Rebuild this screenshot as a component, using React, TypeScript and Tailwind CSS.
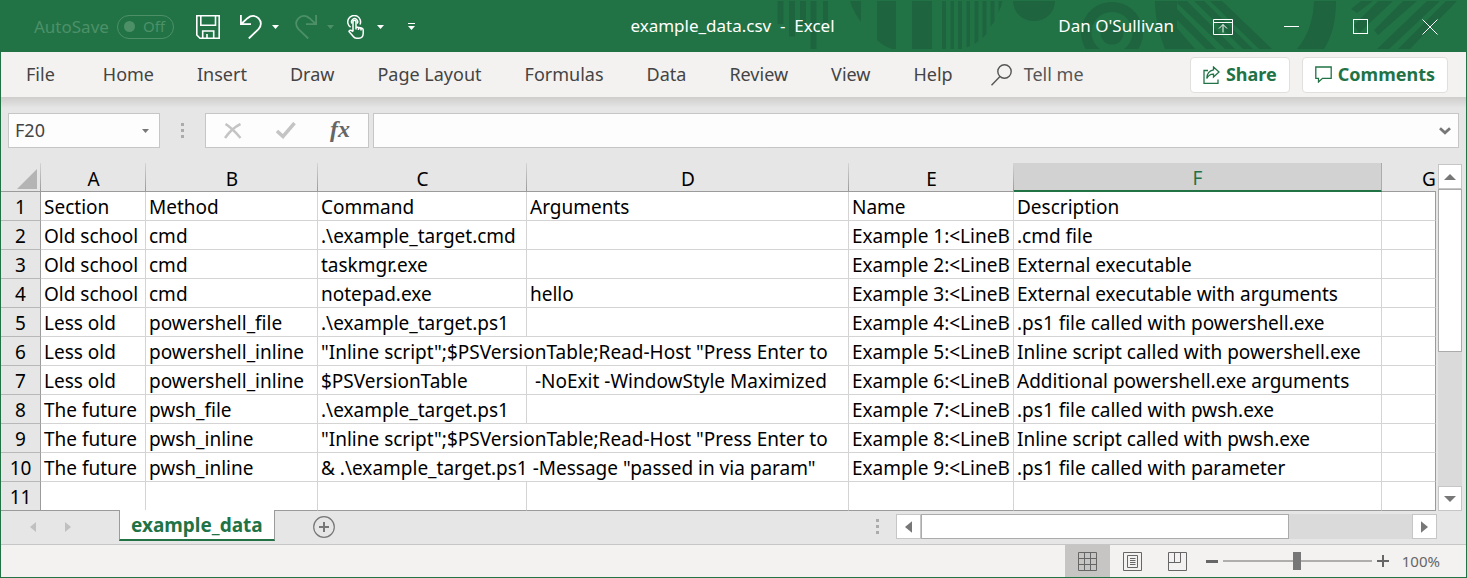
import type { ReactNode } from "react";

const menuItems = ["Home", "Insert", "Draw", "Page Layout", "Formulas", "Data", "Review", "View", "Help"];

type Row = { section: string; method: string; command: string; args?: string; name: string; description: string; spill?: boolean };

const rows: Row[] = [
  { section: "Section", method: "Method", command: "Command", args: "Arguments", name: "Name", description: "Description" },
  { section: "Old school", method: "cmd", command: ".\\example_target.cmd", name: "Example 1:<LineB", description: ".cmd file" },
  { section: "Old school", method: "cmd", command: "taskmgr.exe", name: "Example 2:<LineB", description: "External executable" },
  { section: "Old school", method: "cmd", command: "notepad.exe", args: "hello", name: "Example 3:<LineB", description: "External executable with arguments" },
  { section: "Less old", method: "powershell_file", command: ".\\example_target.ps1", name: "Example 4:<LineB", description: ".ps1 file called with powershell.exe" },
  { section: "Less old", method: "powershell_inline", command: '"Inline script";$PSVersionTable;Read-Host "Press Enter to', name: "Example 5:<LineB", description: "Inline script called with powershell.exe", spill: true },
  { section: "Less old", method: "powershell_inline", command: "$PSVersionTable", args: " -NoExit -WindowStyle Maximized", name: "Example 6:<LineB", description: "Additional powershell.exe arguments" },
  { section: "The future", method: "pwsh_file", command: ".\\example_target.ps1", name: "Example 7:<LineB", description: ".ps1 file called with pwsh.exe" },
  { section: "The future", method: "pwsh_inline", command: '"Inline script";$PSVersionTable;Read-Host "Press Enter to', name: "Example 8:<LineB", description: "Inline script called with pwsh.exe", spill: true },
  { section: "The future", method: "pwsh_inline", command: '& .\\example_target.ps1 -Message "passed in via param"', name: "Example 9:<LineB", description: ".ps1 file called with parameter", spill: true },
  { section: "", method: "", command: "", name: "", description: "" },
];

function Caret({ className }: { className: string }) {
  return (
    <svg viewBox="0 0 7 4" className={"h-1 w-[7px] " + className} fill="currentColor" aria-hidden="true">
      <path d="M0 0H7L3.5 4Z" />
    </svg>
  );
}

function TitlePattern() {
  return (
    <svg className="absolute top-0 right-0 h-[51px] w-[700px] max-w-none" viewBox="766 1 700 51" fill="#1e643e" aria-hidden="true">
      <path d="M777.5 1h6v23h-6zM789 1h6v35.500h-6zM800 1h6v24h-6zM810.500 1h6v48h-6zM823 1h5v24h-5z" />
      <path d="M850 1H861V22Q854 13 850 1ZM877 1H896V49H892Q883 46 877 40ZM912 1H932V49H912Z" />
      <path d="M942 1h4v48h-4zM950.500 1h3.500v48h-3.500zM958 1h4v48h-4zM966.500 1h3.500V46l-3.500 1.500zM974.500 1h4V41l-4 3zM982.500 1h4V34l-4 4zM990.500 1h4V21l-4 6zM998.500 1h4Q1001 7 998.500 13z" />
      <path d="M1013 1H1055A21 20 0 0 1 1013 1Z" />
      <path
        fillRule="evenodd"
        d="M1085.500 49A31 31 0 1 1 1138.500 49H1124A20.500 20.500 0 1 0 1100 49Z"
      />
      <circle cx="1112" cy="33" r="11.500" />
      <path d="M1155 1H1177V28L1195 49H1165Q1155 25 1155 1Z" />
      <path d="M1177 9L1216 49H1206L1177 20ZM1178 1H1187L1235 49H1225L1177 3ZM1194 1H1204L1253 49H1243ZM1210 1H1222L1272 49H1259Z" />
      <path d="M1314 1H1336Q1336 30 1324 49H1297Q1313 30 1314 1Z" />
      <path d="M1351 9L1361 1H1373L1357 13ZM1378 1H1393L1359 33L1354 25ZM1403 1H1417L1378 35L1374 30ZM1427 1H1440L1389 49H1377ZM1446 1H1457L1410 49H1398Z" />
    </svg>
  );
}

function WindowButton({ label, children }: { label: string; children: ReactNode }) {
  return (
    <button aria-label={label} className="flex h-full w-[69px] items-center justify-center">
      {children}
    </button>
  );
}

function TitleBar() {
  return (
    <header className="relative grid h-[51px] grid-cols-[1fr_auto_1fr] items-center overflow-hidden bg-[#217346] pr-0.5 text-[17px] text-white">
      <TitlePattern />
      <div className="relative flex h-full items-center pl-[33px]">
        <span className="w-[83px] text-[#4d9068]" id="autosave">AutoSave</span>
        <button role="switch" aria-checked="false" aria-labelledby="autosave" className="flex h-6 w-[57px] items-center justify-between rounded-full border border-[#4d9068] pr-2 pl-[6px] text-[15px] text-[#4d9068]">
          <span className="size-[11px] rounded-full bg-[#4d9068]" />
          Off
        </button>
        <button aria-label="Save" className="ml-[22px]">
          <svg viewBox="0 0 24 24" className="size-6" fill="none" stroke="currentColor" strokeWidth="1.600">
            <path d="M.8 .8H23.200V23.200H4L.8 20ZM4.800 .8V10.300H19.500V.8M6.700 23V16H17.700V23M11 19V23" />
          </svg>
        </button>
        <button aria-label="Undo" className="ml-5">
          <svg viewBox="0 0 22 24" className="h-6 w-[22px]" fill="none" stroke="currentColor" strokeWidth="1.800">
            <path d="M.9 0V9.200H11M1.200 9L7.500 3.200C11 .2 15.500 .3 18.600 3.300C21.700 6.500 21.500 11 18.500 14.200L8.800 23.500" />
          </svg>
        </button>
        <button aria-label="Undo history" className="ml-2.5"><Caret className="" /></button>
        <button aria-label="Redo" disabled className="ml-4 text-[#4d9068]">
          <svg viewBox="0 0 22 24" className="h-6 w-[22px]" fill="none" stroke="currentColor" strokeWidth="1.800">
            <path d="M21.100 0V9.200H11M20.800 9L14.500 3.200C11 .2 6.500 .3 3.400 3.300C.3 6.500 .5 11 3.500 14.200L13.200 23.500" />
          </svg>
        </button>
        <button aria-label="Redo history" disabled className="ml-2.5 text-[#4d9068]"><Caret className="" /></button>
        <button aria-label="Touch and mouse mode" className="ml-[13px]">
          <svg viewBox="0 0 17 24" className="h-6 w-[17px]" fill="none" stroke="currentColor" strokeWidth="1.500" strokeLinejoin="round">
            <path d="M3.600 12.200A6.400 6.400 0 1 1 13 9.500" />
            <path d="M5.200 8.500A3 3 0 1 1 10 8.500" />
            <path d="M6 16.500V6.500C6 4.900 9 4.900 9 6.500V12L14.500 13Q16.200 13.400 16.200 15V18.500Q16 23.200 12 23.200H9.500Q7.500 23.200 6.300 21.500L2 16.500Q2.500 14.200 6 16.500M9 11V14.500M11.500 12V15M14 12.500V15.500" />
          </svg>
        </button>
        <button aria-label="Touch mode options" className="ml-[13px]"><Caret className="" /></button>
        <button aria-label="Customize Quick Access Toolbar" className="ml-6">
          <svg viewBox="0 0 7 7" className="size-[7px]" fill="currentColor"><path d="M0 0H7V1H0ZM0 3H7L3.500 7Z" /></svg>
        </button>
      </div>
      <h1 className="relative whitespace-pre pb-px">example_data.csv  -  Excel</h1>
      <div className="relative flex h-full items-center justify-end">
        <button className="mr-[14px] pb-px">Dan O'Sullivan</button>
        <WindowButton label="Ribbon Display Options">
          <svg viewBox="0 0 20 16" className="h-4 w-5" fill="none" stroke="currentColor"><path d="M.5 .5H19.500V15.500H.5ZM.5 3.500H19.500M10 13.500V5.500M6 9.500L10 5.500L14 9.500" /></svg>
        </WindowButton>
        <WindowButton label="Minimize"><span className="h-px w-[15px] bg-white" /></WindowButton>
        <WindowButton label="Maximize"><span className="size-[15px] border border-white" /></WindowButton>
        <WindowButton label="Close">
          <svg viewBox="0 0 16 16" className="size-4" fill="none" stroke="currentColor"><path d="M.5 .5L15.500 15.500M15.500 .5L.5 15.500" /></svg>
        </WindowButton>
      </div>
    </header>
  );
}

function Ribbon() {
  return (
    <nav className="flex h-[45px] items-center bg-[#f3f2f1] pr-[18px] pl-[25px] text-[18px] text-[#444444]">
      <button className="mr-12">File</button>
      <div className="flex items-center gap-[43px] whitespace-nowrap">
        {menuItems.map((item) => (
          <button key={item}>{item}</button>
        ))}
      </div>
      <button className="ml-[38px] flex items-center gap-3 whitespace-nowrap text-[#555555]">
        <svg viewBox="0 0 21 22" className="h-[22px] w-[21px]" fill="none" stroke="currentColor" strokeWidth="1.400"><circle cx="13.500" cy="7.500" r="6.700" /><path d="M9 12.500L.5 21.300" /></svg>
        Tell me
      </button>
      <div className="ml-auto flex gap-3 font-bold text-[#217346]">
        <button className="flex h-9 items-center gap-1.5 rounded-sm border border-[#e1dfdd] bg-white px-3">
          <svg viewBox="0 0 17 18" className="h-[18px] w-[17px]" fill="none" stroke="currentColor" strokeWidth="1.300"><path d="M5 4.500H1V17.300H15V13.500M10.500 1L16 6L10.500 11V8.200Q6 8 3.800 12.500Q4 5 10.500 3.900Z" /></svg>
          Share
        </button>
        <button className="flex h-9 items-center gap-1.5 rounded-sm border border-[#e1dfdd] bg-white px-3">
          <svg viewBox="0 0 17 17" className="size-[17px]" fill="none" stroke="currentColor" strokeWidth="1.300"><path d="M.8 1H16.200V12.300H7.500L3.500 16V12.300H.8Z" /></svg>
          Comments
        </button>
      </div>
    </nav>
  );
}

function Grip() {
  return (
    <svg viewBox="0 0 3 15" className="h-[15px] w-[3px] shrink-0" fill="#ababab" aria-hidden="true">
      <path d="M0 0h3v3H0zM0 6h3v3H0zM0 12h3v3H0z" />
    </svg>
  );
}

function FormulaBar() {
  return (
    <div className="flex h-[66px] items-start bg-linear-to-b from-[#cfcdcc] to-[#e6e6e6] to-[11px] pt-4 pr-[7px] pl-[7px]">
      <div className="flex h-[35px] w-[152px] items-center border border-[#c6c6c6] bg-[#fdfdfd]">
        <input aria-label="Name Box" defaultValue="F20" className="w-0 grow bg-transparent pl-1.5 text-[18px] text-[#444444] outline-none" />
        <button aria-label="Name list" className="mr-2.5 text-[#777777]"><Caret className="" /></button>
      </div>
      <div className="flex h-[35px] w-[45px] items-center justify-center"><Grip /></div>
      <div className="flex h-[35px] w-[164px] items-center justify-between border border-[#c6c6c6] bg-[#fdfdfd] px-[18px] text-[#c4c4c4]">
        <button aria-label="Cancel" disabled>
          <svg viewBox="0 0 18 16" className="h-4 w-[18px]" fill="none" stroke="currentColor" strokeWidth="2.500"><path d="M1.500 1Q8 5 16.500 15M16.500 1Q8 5 1 15" /></svg>
        </button>
        <button aria-label="Enter" disabled>
          <svg viewBox="0 0 20 17" className="h-[17px] w-5" fill="none" stroke="currentColor" strokeWidth="3.500"><path d="M1 9L7 14.500L18.500 1" /></svg>
        </button>
        <button aria-label="Insert Function" className="pb-1 font-['Liberation_Serif',serif] text-[24px] leading-6 font-bold text-[#666666] italic">fx</button>
      </div>
      <div className="ml-1 flex h-[35px] grow items-center border border-[#c6c6c6] bg-[#fdfdfd]">
        <input aria-label="Formula Bar" className="w-0 grow bg-transparent px-2 text-[18px] outline-none" />
        <button aria-label="Expand Formula Bar" className="mr-[7px] text-[#777777]">
          <svg viewBox="0 0 12 8" className="h-2 w-3" fill="none" stroke="currentColor" strokeWidth="2.800"><path d="M1 1.300L6 5.800L11 1.300" /></svg>
        </button>
      </div>
    </div>
  );
}

const headCell = "relative h-[29px] border-b border-[#9b9b9b] bg-[#e6e6e6] p-0 pt-[3px] leading-6 font-normal after:absolute after:right-0 after:bottom-0 after:h-7 after:w-px after:bg-linear-to-b after:from-[#d4d4d4] after:to-[#9b9b9b]";
const cell = "h-[29px] overflow-hidden border-r border-b border-[#d4d4d4] bg-white py-0 pt-0.5 pl-[3px] whitespace-pre group-last:border-b-[#9b9b9b]";

function Sheet() {
  return (
    <div className="min-w-0 grow overflow-hidden">
      <table className="w-full table-fixed border-separate border-spacing-0 text-[19px] leading-[26px] text-black">
        <colgroup>
          <col className="w-10" />
          <col className="w-[105px]" />
          <col className="w-[172px]" />
          <col className="w-[209px]" />
          <col className="w-[322px]" />
          <col className="w-[165px]" />
          <col className="w-[368px]" />
          <col />
        </colgroup>
        <thead>
          <tr>
            <th className={headCell}>
              <button aria-label="Select all" className="block w-full pr-1">
                <svg viewBox="0 0 20 20" className="ml-auto size-5" fill="#b4b4b4"><path d="M20 0V20H0Z" /></svg>
              </button>
            </th>
            {["A", "B", "C", "D", "E"].map((c) => (
              <th key={c} scope="col" className={headCell}>{c}</th>
            ))}
            <th scope="col" className="h-[29px] border-r border-b-2 border-r-[#ababab] border-b-[#217346] bg-[#d2d2d2] p-0 pt-[3px] leading-6 font-normal text-[#217346]">F</th>
            <th scope="col" className="h-[29px] overflow-hidden border-b border-[#9b9b9b] bg-[#e6e6e6] p-0 pt-[3px] leading-6 font-normal">
              <div className="w-[94px] text-center">G</div>
            </th>
          </tr>
        </thead>
        <tbody>
          {rows.map((row, i) => (
            <tr key={i} className="group">
              <th scope="row" className="h-[29px] border-r border-b border-r-[#9b9b9b] border-b-[#b8b8b8] bg-[#e6e6e6] p-0 pt-0.5 text-center font-normal group-last:border-b-[#9b9b9b]">{i + 1}</th>
              <td className={cell}>{row.section}</td>
              <td className={cell}>{row.method}</td>
              <td className={cell} colSpan={row.spill ? 2 : 1}>{row.command}</td>
              {!row.spill && <td className={cell}>{row.args}</td>}
              <td className={cell}>{row.name}</td>
              <td className={cell}>{row.description}</td>
              <td className="border-r border-b border-r-[#9b9b9b] border-b-[#d4d4d4] bg-white group-last:border-b-[#9b9b9b]" />
            </tr>
          ))}
        </tbody>
      </table>
    </div>
  );
}

function Triangle({ className }: { className: string }) {
  return (
    <svg viewBox="0 0 12 6" className={"h-1.5 w-3 " + className} fill="currentColor" aria-hidden="true"><path d="M0 6H12L6 0Z" /></svg>
  );
}

function VerticalScroll() {
  return (
    <div className="mt-px mr-1 ml-0.5 flex w-6 shrink-0 flex-col bg-[#dadada] text-[#777777]">
      <button aria-label="Scroll up" className="flex h-[25px] items-center justify-center border border-[#c6c6c6] bg-white"><Triangle className="" /></button>
      <div className="h-[163px] border border-[#ababab] bg-white" />
      <button aria-label="Scroll down" className="mt-auto flex h-[25px] items-center justify-center border border-[#c6c6c6] bg-white"><Triangle className="rotate-180" /></button>
    </div>
  );
}

function SideArrow({ className }: { className: string }) {
  return (
    <svg viewBox="0 0 6 10" className={className} fill="currentColor" aria-hidden="true"><path d="M0 0V10L6 5Z" /></svg>
  );
}

function TabsBar() {
  return (
    <div className="flex h-[34px] items-start border-b border-[#c6c6c6]">
      <div className="flex h-8 w-[118px] items-center pl-[29px] text-[#c0c0c0]">
        <button aria-label="Previous sheet" disabled><SideArrow className="h-2.5 w-1.5 rotate-180" /></button>
        <button aria-label="Next sheet" disabled className="ml-[29px]"><SideArrow className="h-2.5 w-1.5" /></button>
      </div>
      <button className="relative -mt-px h-[31px] border-x border-b-2 border-x-[#9b9b9b] border-b-[#217346] bg-white px-[11px] text-[19px] leading-7 font-bold text-[#217346]">example_data</button>
      <button aria-label="New sheet" className="mt-[5px] ml-[38px]">
        <svg viewBox="0 0 22 22" className="size-[22px]" fill="none" stroke="#777777"><circle cx="11" cy="11" r="10.300" strokeWidth="1.200" /><path d="M11 6V16M6 11H16" strokeWidth="2" /></svg>
      </button>
      <div className="mr-[29px] ml-auto flex items-center pt-[3px]">
        <div className="mr-[17px]"><Grip /></div>
        <div className="flex bg-[#dadada] text-[#777777]">
          <button aria-label="Scroll left" className="flex h-[25px] w-[25px] items-center justify-center border border-[#c6c6c6] bg-white"><SideArrow className="h-3 w-[7px] rotate-180" /></button>
          <div className="mr-[123px] w-[368px] border border-[#ababab] bg-white" />
          <button aria-label="Scroll right" className="flex h-[25px] w-[25px] items-center justify-center border border-[#c6c6c6] bg-white"><SideArrow className="h-3 w-[7px]" /></button>
        </div>
      </div>
    </div>
  );
}

function StatusBar() {
  return (
    <footer className="flex h-8 items-center justify-end bg-[#f3f2f1] pr-[26px] text-[#666666]">
      <button aria-label="Normal view" aria-pressed="true" className="flex h-full w-[45px] items-center justify-center bg-[#c6c5c4]">
        <svg viewBox="0 0 19 19" className="size-[19px]" fill="none" stroke="currentColor"><path d="M.5 .5H18.500V18.500H.5ZM6.500 .5V18.500M12.500 .5V18.500M.5 6.500H18.500M.5 12.500H18.500" /></svg>
      </button>
      <button aria-label="Page layout view" className="flex h-full w-[45px] items-center justify-center">
        <svg viewBox="0 0 19 19" className="size-[19px]" fill="none" stroke="currentColor"><path d="M.5 .5H18.500V18.500H.5ZM4.500 3.500H14.500V15.500H4.500ZM7 6.500H12.500M7 8.500H12.500M7 10.500H12.500M7 12.500H12.500" /></svg>
      </button>
      <button aria-label="Page break preview" className="flex h-full w-[45px] items-center justify-center">
        <svg viewBox="0 0 19 19" className="size-[19px]" fill="none" stroke="currentColor"><path d="M.5 .5H18.500V18.500H.5ZM6.500 .5V10.500M12.500 .5V10.500M.5 10.500H12.500" /></svg>
      </button>
      <button aria-label="Zoom out" className="ml-1.5 h-[3px] w-3 bg-[#666666]" />
      <input
        type="range"
        aria-label="Zoom"
        min={0}
        max={100}
        defaultValue={50}
        className="mx-[5px] h-[18px] w-[149px] appearance-none bg-[linear-gradient(#b0aeac,#b0aeac)] bg-size-[100%_2px] bg-center bg-no-repeat [&::-webkit-slider-thumb]:h-[18px] [&::-webkit-slider-thumb]:w-2 [&::-webkit-slider-thumb]:appearance-none [&::-webkit-slider-thumb]:rounded-none [&::-webkit-slider-thumb]:bg-[#777777]"
      />
      <button aria-label="Zoom in">
        <svg viewBox="0 0 12 12" className="size-3" fill="none" stroke="currentColor" strokeWidth="2"><path d="M0 6H12M6 0V12" /></svg>
      </button>
      <button className="ml-[13px] text-[15px]">100%</button>
    </footer>
  );
}

export default function App() {
  return (
    <div className="flex min-h-screen flex-col border border-[#217346] bg-[#e6e6e6] font-['Noto_Sans',sans-serif]">
      <TitleBar />
      <Ribbon />
      <FormulaBar />
      <main className="flex">
        <Sheet />
        <VerticalScroll />
      </main>
      <TabsBar />
      <StatusBar />
    </div>
  );
}
